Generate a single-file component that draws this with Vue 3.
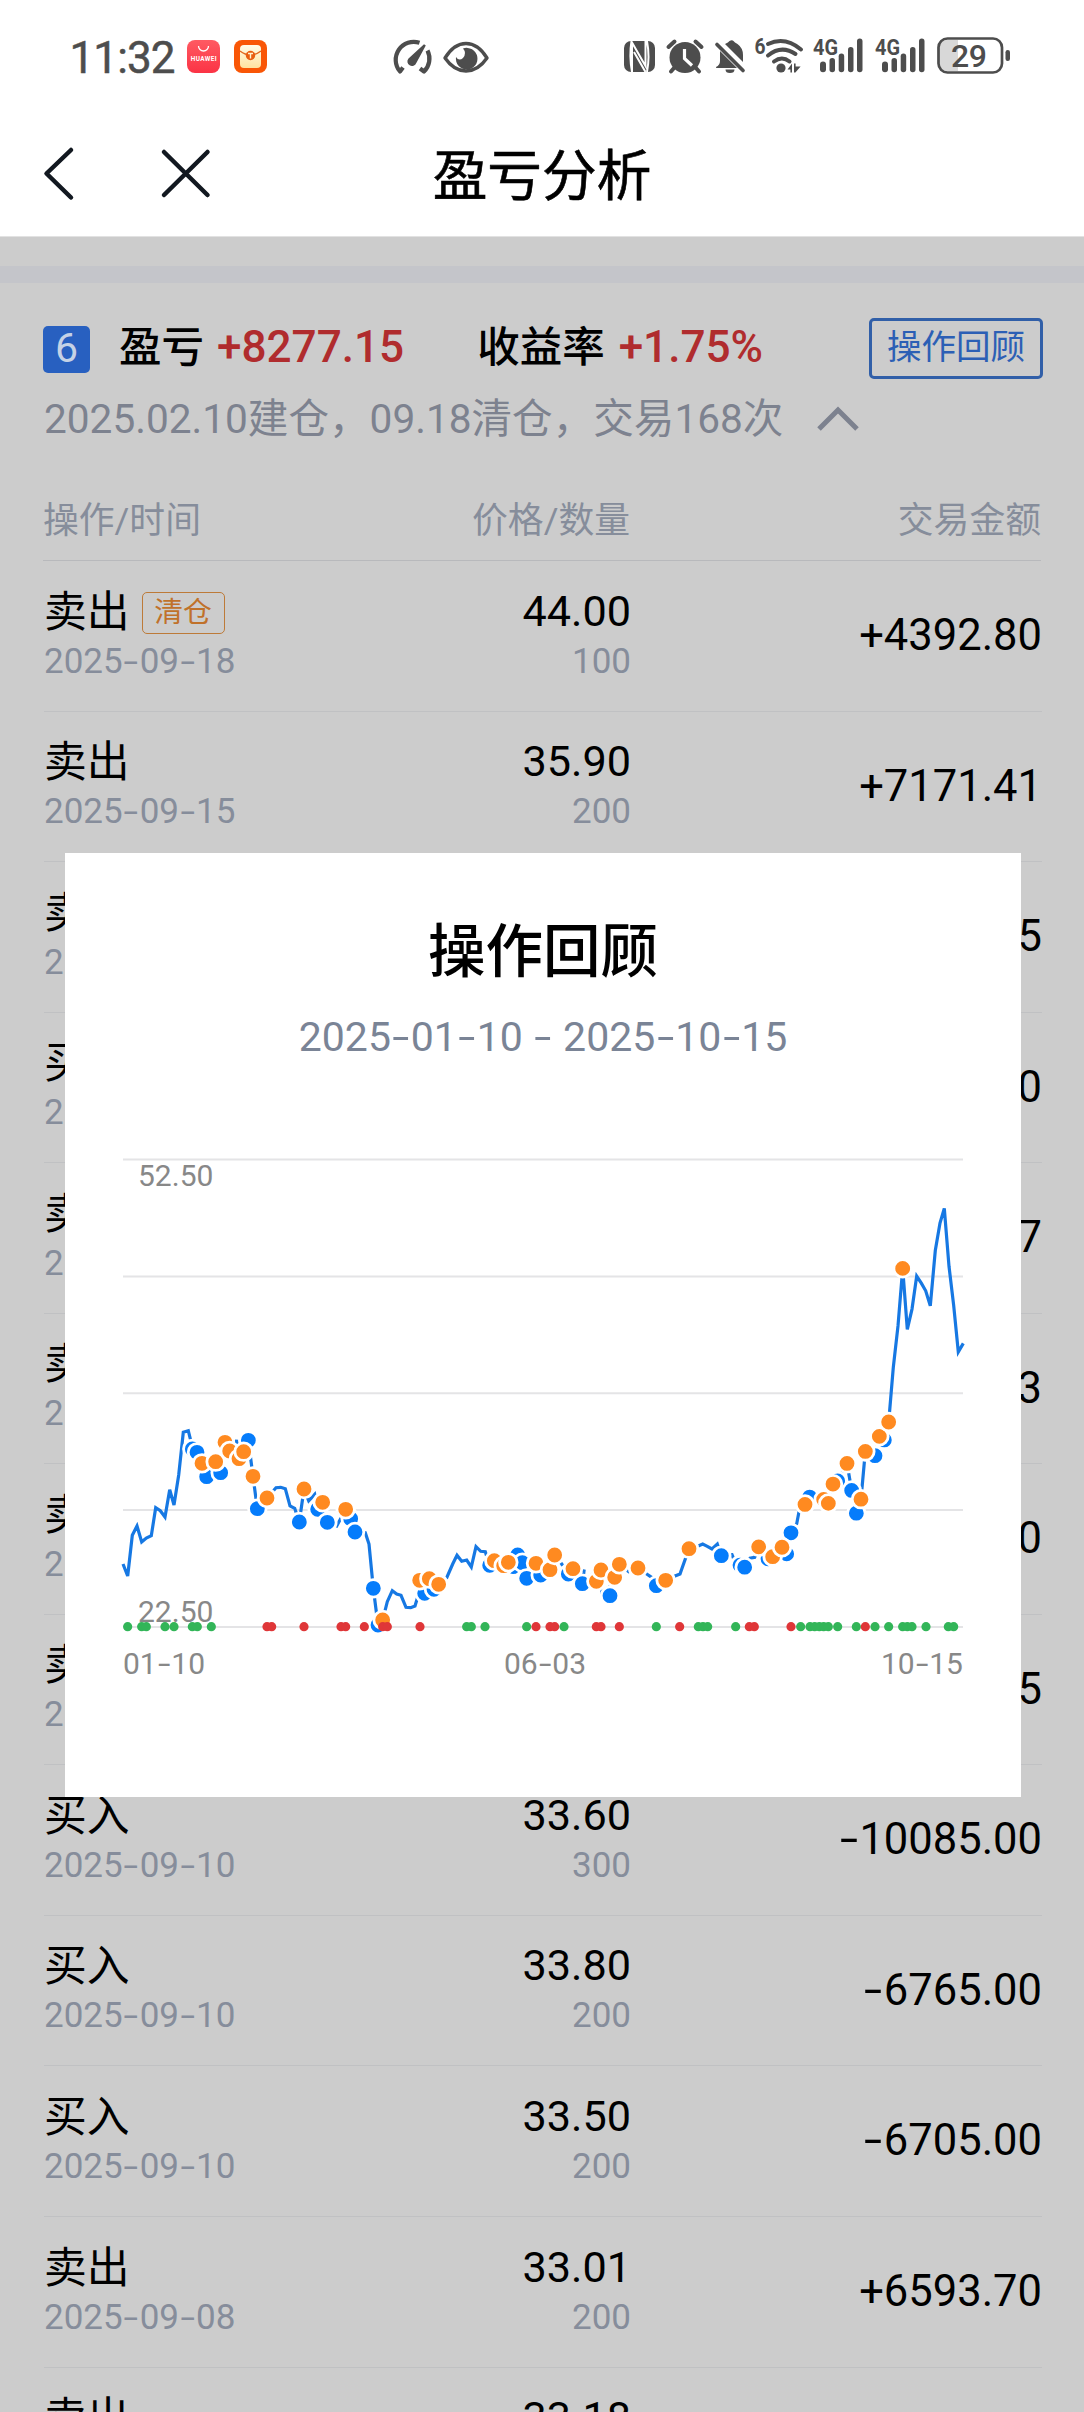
<script setup>
import { h } from 'vue'

// Renders numbers and dates with the wide dash used by the app
const Num = ({ t }) =>
  h('span', { class: 'num' }, t.split(/(-)/).map(p => (p === '-' ? h('span', { class: 'dash' }, [h('i', '-')]) : p)))
Num.props = ['t']

const rows = [
  ['卖出', '2025-09-18', '44.00', '100', '+4392.80', '清仓'],
  ['卖出', '2025-09-15', '35.90', '200', '+7171.41'],
  ['卖出', '2025-09-15', '35.40', '200', '+7071.55'],
  ['买入', '2025-09-12', '34.90', '200', '-6985.00'],
  ['卖出', '2025-09-12', '35.20', '200', '+7031.67'],
  ['卖出', '2025-09-11', '34.60', '200', '+6911.83'],
  ['卖出', '2025-09-11', '34.20', '200', '+6831.90'],
  ['卖出', '2025-09-10', '33.90', '200', '+6771.95'],
  ['买入', '2025-09-10', '33.60', '300', '-10085.00'],
  ['买入', '2025-09-10', '33.80', '200', '-6765.00'],
  ['买入', '2025-09-10', '33.50', '200', '-6705.00'],
  ['卖出', '2025-09-08', '33.01', '200', '+6593.70'],
  ['卖出', '2025-09-08', '33.18', '200', '+6627.68'],
]

// Each part of the series has its own origin and scale
const partA = ([x, y]) => [110 + x / 3, 1380 + y / 3]
const partB = ([x, y]) => [430 + x / 3, 1500 + y / 3]
const partC = ([x, y]) => [700 + x / 3, 1140 + y / 2.851]
const join = (a, b, c) => [...a.map(partA), ...b.map(partB), ...c.map(partC)]

const line = join(
  [[39,552],[53,588],[67,466],[81,438],[95,486],[109,474],[124,467],[137,383],[151,392],[165,411],[179,329],[192,375],[206,285],[220,157],[235,152],[243,185],[261,217],[276,250],[290,290],[317,245],[332,278],[345,187],[359,213],[368,215],[380,180],[387,236],[401,215],[415,181],[429,289],[442,386],[471,354],[498,323],[512,322],[526,326],[540,378],[554,385],[568,426],[582,327],[596,362],[614,343],[623,388],[638,367],[652,427],[680,438],[707,388],[722,416],[735,456],[766,458],[777,492],[790,625],[804,735],[818,720],[832,665],[847,632],[860,642],[873,646],[888,682],[902,683],[915,678],[922,655],[944,640],[958,596],[972,628],[986,613]],
  [[50,233],[68,192],[81,166],[95,184],[110,180],[124,201],[138,140],[152,154],[166,155],[179,198],[193,182],[221,197],[235,187],[249,200],[263,165],[277,188],[290,235],[318,190],[332,225],[360,209],[374,165],[395,192],[415,222],[429,206],[462,213],[457,251],[485,225],[499,244],[513,210],[515,275],[540,260],[540,287],[554,232],[568,193],[596,215],[624,204],[650,222],[665,232],[679,257],[707,241],[735,228],[750,222],[766,177],[777,146],[805,138],[818,132],[832,139],[846,147],[862,132],[874,167]],
  [[64,1184],[96,1182],[106,1205],[120,1212],[134,1218],[150,1192],[164,1190],[176,1160],[204,1194],[218,1188],[246,1161],[260,1180],[273,1120],[290,1094],[297,1060],[315,1039],[329,1018],[371,1025],[385,1036],[399,981],[413,972],[441,922],[455,999],[469,1064],[483,1024],[496,888],[525,900],[538,845],[553,855],[566,804],[580,648],[594,530],[608,366],[622,540],[636,482],[650,388],[664,408],[677,430],[691,473],[706,315],[720,237],[733,195],[747,360],[761,472],[775,604],[790,580]]
).map(p => p.map(n => n.toFixed(1)).join(',')).join(' ')

const buys = join(
  [[247,207],[261,217],[290,290],[332,278],[415,181],[442,386],[568,426],[623,388],[652,427],[722,416],[735,456],[790,625],[804,735],[944,640],[972,628]],
  [[179,196],[249,200],[263,165],[277,188],[290,235],[332,225],[415,222],[457,251],[540,287],[679,257],[874,167]],
  [[120,1212],[134,1218],[204,1194],[260,1180],[273,1120],[329,1018],[413,972],[455,999],[469,1064],[525,900],[553,855]]
)
const sells = join(
  [[276,250],[317,245],[345,187],[359,213],[387,236],[401,215],[429,289],[471,354],[582,327],[638,367],[707,388],[818,720],[929,601],[958,596],[986,613]],
  [[193,182],[221,197],[235,187],[318,190],[360,209],[374,165],[429,206],[499,244],[513,210],[554,232],[568,193],[624,204],[707,241],[777,146]],
  [[176,1160],[218,1188],[246,1161],[315,1039],[371,1025],[385,1036],[399,981],[441,922],[483,1024],[496,888],[538,845],[566,804],[608,366]]
)
const xs = (a, b, c) => [...a.map(x => 110 + x / 3), ...b.map(x => 430 + x / 3), ...c.map(x => 700 + x / 3)]
const greens = xs([53,95,109,165,192,247,262,304], [110,124,165,290,402,679,805,819,833], [107,302,330,344,358,371,385,413,469,525,566,608,622,636,678,745,761])
const reds = xs([471,485,582,693,707,763,818,832,930], [318,360,374,499,513,568,749], [148,163,273,496])
const grid = [1159.5, 1276.5, 1393.3, 1510, 1627]
</script>

<template>
  <div class="page">
    <header class="status">
      <svg width="1084" height="100" viewBox="0 0 1084 100" fill="#4d4d4d">
        <text x="69.500" y="73" font-size="44" textLength="106" stroke="#4d4d4d" stroke-width=".5">11:32</text>
        <defs>
          <linearGradient id="hw" x1="0" y1="0" x2="0" y2="1"><stop offset="0" stop-color="#ff5a62" /><stop offset="1" stop-color="#fb3345" /></linearGradient>
          <linearGradient id="env" x1="0" y1="0" x2="0" y2="1"><stop offset="0" stop-color="#fffbe8" /><stop offset="1" stop-color="#ffe2a0" /></linearGradient>
        </defs>
        <rect x="187" y="40" width="33" height="33" rx="8" fill="url(#hw)" />
        <path d="M198.500 46a5 5 0 0 0 10 0" fill="none" stroke="#fff" stroke-width="1.300" />
        <text x="190.700" y="61.200" font-size="6.400" font-weight="700" fill="#fff" textLength="26">HUAWEI</text>
        <rect x="234" y="40" width="33" height="33" rx="8" fill="#f95606" />
        <rect x="240" y="45" width="21" height="23" rx="4" fill="url(#env)" />
        <path d="M240 51q10.500 8 21 0" fill="none" stroke="#e2661c" stroke-width="1.500" />
        <circle cx="250.500" cy="55.500" r="4.700" fill="#e95d10" />
        <path d="M248 53.500h5M250.500 53.500v5" stroke="#fff2d0" stroke-width="1.400" />

        <g fill="none" stroke="#4d4d4d" stroke-width="4.200">
          <path d="M419.500 42.800A18 18 0 0 0 400 71.500L403 67.500" stroke-linejoin="round" />
          <path d="M427.500 50.500A18 18 0 0 1 424 71.500L420 68.500" stroke-linejoin="round" />
        </g>
        <path d="M424 44.200l1.800 1.300-9.500 17.500a4.600 4.600 0 1 1-7.800-4.600z" />
        <path d="M445 58q9-14.500 21-14.500T487 58q-9 13-21 13t-21-13z" fill="none" stroke="#4d4d4d" stroke-width="3.400" stroke-linejoin="round" />
        <path d="M463 48.500a10.800 10.800 0 1 1-7 8.500q3 4.500 7 1 4-5 0-9.500z" />

        <rect x="624" y="41" width="31" height="31" rx="7" />
        <g fill="none" stroke="#fff" stroke-width="2"><path d="M631.500 41q-2.500 15 .5 31V42.500L645.500 66V41M634 52l11.500 20M647 72q3-15 0-31" /></g>
        <circle cx="685" cy="57.500" r="15.500" />
        <path d="M668.500 47l6-5.500M695.500 41.500l6 5.500M674 68l-3 3.500M696 68l3 3.500" stroke="#4d4d4d" stroke-width="4" stroke-linecap="round" />
        <path d="M684.500 49v9.500l7.500 7" fill="none" stroke="#fff" stroke-width="3.200" />
        <path d="M716 67q4-2 4-6V51l17 17h-20q-1.500 0-1-1zM725 44q3.500-1.500 4.500-3 2.500-1.500 4 0 1 1.300 4 3Q743 48 743 55v7zM725.500 69.500h9a4.500 3.500 0 0 1-9 0z" />
        <path d="M717 44.500l26 26" stroke="#4d4d4d" stroke-width="3.700" stroke-linecap="round" />
        <text x="754.500" y="53.500" font-size="22" font-weight="700" textLength="11" lengthAdjust="spacingAndGlyphs">6</text>
        <g fill="none" stroke="#4d4d4d" stroke-width="4" stroke-linecap="round">
          <path d="M768 44q17-8 33 5.500M768 55.500q13.500-11 27.500-1.500M774 61.500q8-6 15.500 0" />
        </g>
        <circle cx="781" cy="68" r="4.600" />
        <path d="M787.500 69.500l4.500-6v9h-1.600v-3zM794 63.500h1.600v3h5l-5.200 6H794z" />
        <g v-for="o in [0, 62]" :key="o" :transform="`translate(${o})`">
          <text x="813" y="54.500" font-size="22" font-weight="700" textLength="25" lengthAdjust="spacingAndGlyphs">4G</text>
          <rect x="820" y="61.500" width="6" height="10.700" rx="3" /><rect x="829.500" y="58" width="5.500" height="14.200" rx="2.700" />
          <rect x="838.700" y="53.500" width="5.500" height="18.700" rx="2.700" /><rect x="848" y="47" width="5.500" height="25.200" rx="2.700" /><rect x="857" y="38.500" width="5.500" height="33.700" rx="2.700" />
        </g>
        <path d="M958 40h-11a8 8 0 0 0-8 8v15a8 8 0 0 0 8 8h11z" fill="#d8d8d8" />
        <rect x="938.500" y="38.500" width="63.500" height="34" rx="9" fill="none" stroke="#4d4d4d" stroke-width="2.700" />
        <rect x="1005.500" y="50" width="4.500" height="11" rx="2.200" />
        <text x="951" y="67" font-size="32" font-weight="500" textLength="36">29</text>
      </svg>
    </header>
    <nav class="nav">
      <svg class="navico" width="240" height="136" viewBox="0 100 240 136" fill="none" stroke="#121820" stroke-width="4.500" stroke-linecap="round" stroke-linejoin="round">
        <path d="M71 150L46.500 173.500 71 197.500M164 152L207.500 195M207.500 152L164 195" />
      </svg>
      <h1>盈亏分析</h1>
      <span class="navico"></span>
    </nav>

    <main class="content">
      <div class="band"></div>
      <section class="summary">
        <span class="badge">6</span>
        <b class="lbl a">盈亏</b><b class="red b">+8277.15</b>
        <b class="lbl c">收益率</b><b class="red d">+1.75%</b>
        <button>操作回顾</button>
      </section>
      <div class="desc">
        <span>2025.02.10建仓，09.18清仓，交易168次</span>
        <svg width="42" height="26" viewBox="0 0 42 26"><path d="M2 23L21 4l19 19" fill="none" stroke="#7d828f" stroke-width="5" /></svg>
      </div>
      <div class="thead"><span>操作/时间</span><span class="mid">价格/数量</span><span class="end">交易金额</span></div>
      <ul>
        <li v-for="(r, i) in rows" :key="i">
          <div class="col">
            <div class="main">{{ r[0] }}<em v-if="r[5]">{{ r[5] }}</em></div>
            <div class="sub"><Num :t="r[1]" /></div>
          </div>
          <div class="col mid">
            <div class="main">{{ r[2] }}</div>
            <div class="sub">{{ r[3] }}</div>
          </div>
          <div class="end amount"><Num :t="r[4]" /></div>
        </li>
      </ul>
    </main>

    <div class="modal">
      <h2>操作回顾</h2>
      <p><Num t="2025-01-10 - 2025-10-15" /></p>
      <svg class="chart" width="956" height="500" viewBox="65 1140 956 500">
        <path v-for="y in grid" :key="y" :d="`M123 ${y}H963`" stroke="#e4e4e6" stroke-width="2" />
        <polyline :points="line" fill="none" stroke="#1678e3" stroke-width="3.200" />
        <g stroke="#fff" stroke-width="2.800">
          <circle v-for="(p, i) in buys" :key="'b' + i" :cx="p[0]" :cy="p[1]" r="8.800" fill="#057cfb" />
          <circle v-for="(p, i) in sells" :key="'s' + i" :cx="p[0]" :cy="p[1]" r="8.800" fill="#ff8a20" />
        </g>
        <g font-size="30" fill="#888">
          <text x="138" y="1185.500">52.50</text>
          <text x="138" y="1621.500">22.50</text>
        </g>
        <circle v-for="x in greens" :key="'g' + x" :cx="x" cy="1626.700" r="4.600" fill="#32b558" />
        <circle v-for="x in reds" :key="'r' + x" :cx="x" cy="1626.700" r="4.600" fill="#df3638" />
      </svg>
      <div class="axis"><Num t="01-10" /><Num class="axmid" t="06-03" /><Num t="10-15" /></div>
    </div>
  </div>
</template>

<style>
body { margin: 0; background: #ccc; }
.num .dash { display: inline-block; width: .485em; text-align: center; }
.num .dash i { display: inline-block; font-style: normal; transform: scaleX(1.5); }
</style>

<style scoped>
.page { position: relative; width: 1084px; height: 2412px; overflow: hidden; background: #ccc; color: #000; font-family: Roboto, "Noto Sans CJK SC", sans-serif; font-size: 43px; white-space: nowrap; }
.status { height: 100px; background: #fff; }
.status svg, .nav svg { display: block; }
.nav { height: 136px; background: #fff; border-bottom: 1px solid #e2e2e2; display: flex; align-items: center; justify-content: space-between; }
.navico { width: 240px; }
h1 { margin: 0; padding-top: 15px; font-size: 54.700px; line-height: 80px; font-weight: 400; -webkit-text-stroke: .6px #000; }
.band { margin-top: 29px; height: 17px; background: #c4c5ca; }
.summary { display: flex; align-items: center; height: 61px; margin: 35px 41px 0 43px; line-height: 61px; }
.badge { width: 47px; height: 47px; line-height: 45px; border-radius: 5px; background: #2860c0; color: #c5d2e6; font-size: 41px; text-align: center; margin-top: 2px; }
.summary b { font-weight: 500; height: 64px; }
.lbl { font-size: 42.500px; }
.red { color: #b02c2e; font-size: 44.100px; }
.a { margin-left: 29px; } .b { margin-left: 13px; } .c { margin-left: 73px; } .d { margin-left: 14px; }
button { margin: 0 0 0 auto; box-sizing: border-box; width: 174px; height: 61px; padding: 0 0 4px; border: 3px solid #315fa8; border-radius: 5px; background: none; color: #2c5fb5; font: 34.500px/50px Roboto, "Noto Sans CJK SC", sans-serif; }
.desc { display: flex; align-items: center; gap: 34px; height: 60px; margin: 10px 43px 0 44px; font-size: 40.600px; line-height: 60px; color: #7d828f; }
.thead { display: flex; height: 79px; margin: 31px 43px 0; border-bottom: 1px solid #b8b9bc; font-size: 35.800px; line-height: 80px; color: #868d9b; padding-top: 1px; }
.thead > span:first-child, .col:first-child { width: 300px; }
.mid { width: 287px; text-align: right; }
.end { flex: 1; text-align: right; }
ul { list-style: none; margin: 0 42px 0 44px; padding: 0; }
li { display: flex; box-sizing: border-box; height: 150.550px; border-bottom: 1px solid #c0c1c3; }
.main { display: flex; align-items: center; height: 50px; margin-top: 25.500px; line-height: 50px; font-size: 42.800px; }
.mid .main { justify-content: flex-end; font-size: 43.200px; }
.sub { font-size: 35px; line-height: 49px; color: #868d9b; }
em { box-sizing: border-box; width: 83px; height: 42px; margin: 2px 0 0 12px; border: 1.500px solid #bd7a38; border-radius: 5px; color: #c0712a; font-style: normal; font-size: 28.800px; line-height: 38px; text-align: center; }
.amount { font-size: 43.500px; line-height: 150px; }
.modal { position: absolute; left: 65px; top: 853px; width: 956px; height: 944px; background: #fff; text-align: center; }
h2 { margin: 0; padding-top: 60px; font-size: 57.500px; line-height: 80px; font-weight: 500; }
p { margin: 16px 0 0; font-size: 41px; line-height: 56px; color: #7a8496; }
.chart { display: block; margin-top: 75px; }
.axis { display: flex; justify-content: space-between; padding: 0 58px; font-size: 30px; line-height: 48px; color: #888; }
.axmid { padding-left: 4px; }
</style>
